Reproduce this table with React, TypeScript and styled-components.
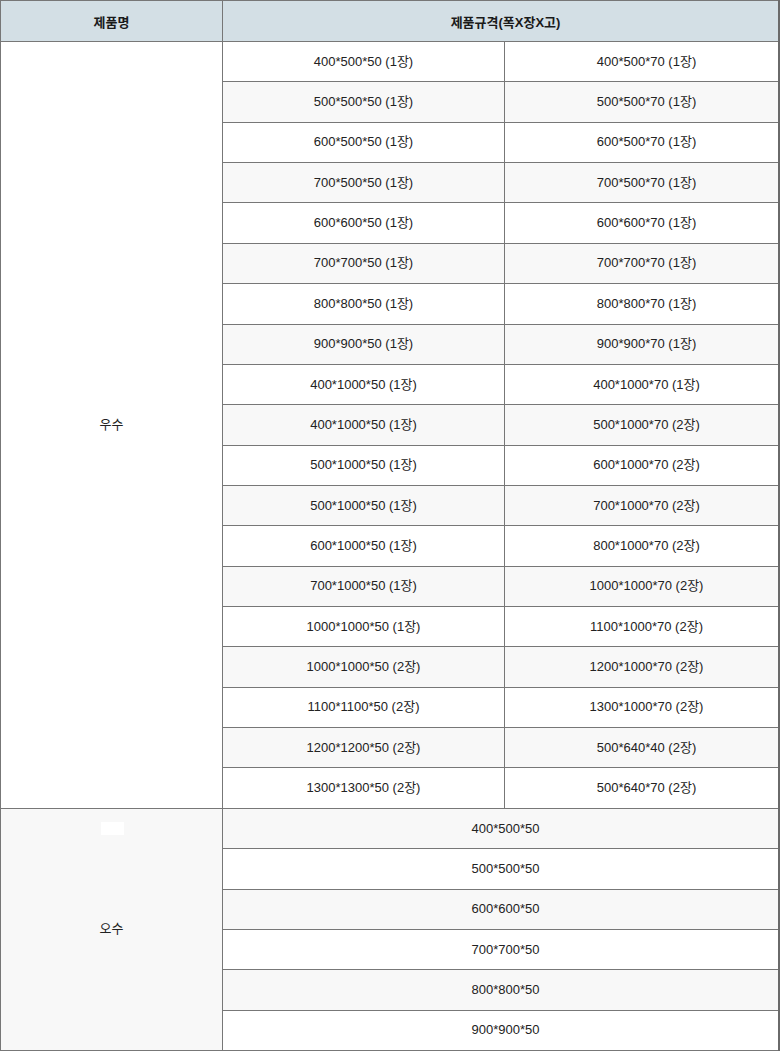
import React from 'react'
import styled, { createGlobalStyle } from 'styled-components'

const GlobalStyle = createGlobalStyle`
  html, body {
    margin: 0;
    padding: 0;
    background: #ffffff;
  }
  body {
    font-family: "Liberation Sans", "Noto Sans CJK KR", sans-serif;
    font-size: 13px;
    color: #222222;
  }
`

const Frame = styled.div`
  width: 780px;
  box-sizing: border-box;
  overflow: hidden;
  border-right: 2px solid #6a6a6a;
`

const Table = styled.table`
  width: 788px;
  border-collapse: collapse;
  table-layout: fixed;
  border: 1px solid #777777;
`

const HeadCell = styled.th`
  height: 40px;
  padding: 0;
  background: #d3dfe5;
  border: 1px solid #777777;
  font-weight: bold;
  font-size: 13px;
  text-align: center;
  vertical-align: middle;
  color: #1a1a1a;
`

const Row = styled.tr`
  height: 40.36px;
  &:nth-child(even) {
    background: #f8f8f8;
  }
`

const Cell = styled.td`
  padding: 0;
  border: 1px solid #777777;
  text-align: center;
  vertical-align: middle;
  font-size: 13px;
  line-height: 16px;
`

const GroupCell = styled(Cell)`
  position: relative;
`

const Blank = styled.span`
  position: absolute;
  left: 100px;
  top: 13px;
  width: 23px;
  height: 13px;
  background: #ffffff;
`

const wet: [string, string][] = [
  ['400*500*50 (1장)', '400*500*70 (1장)'],
  ['500*500*50 (1장)', '500*500*70 (1장)'],
  ['600*500*50 (1장)', '600*500*70 (1장)'],
  ['700*500*50 (1장)', '700*500*70 (1장)'],
  ['600*600*50 (1장)', '600*600*70 (1장)'],
  ['700*700*50 (1장)', '700*700*70 (1장)'],
  ['800*800*50 (1장)', '800*800*70 (1장)'],
  ['900*900*50 (1장)', '900*900*70 (1장)'],
  ['400*1000*50 (1장)', '400*1000*70 (1장)'],
  ['400*1000*50 (1장)', '500*1000*70 (2장)'],
  ['500*1000*50 (1장)', '600*1000*70 (2장)'],
  ['500*1000*50 (1장)', '700*1000*70 (2장)'],
  ['600*1000*50 (1장)', '800*1000*70 (2장)'],
  ['700*1000*50 (1장)', '1000*1000*70 (2장)'],
  ['1000*1000*50 (1장)', '1100*1000*70 (2장)'],
  ['1000*1000*50 (2장)', '1200*1000*70 (2장)'],
  ['1100*1100*50 (2장)', '1300*1000*70 (2장)'],
  ['1200*1200*50 (2장)', '500*640*40 (2장)'],
  ['1300*1300*50 (2장)', '500*640*70 (2장)'],
]

const sewage = ['400*500*50', '500*500*50', '600*600*50', '700*700*50', '800*800*50', '900*900*50']

export default function App() {
  return (
    <>
      <GlobalStyle />
      <Frame>
        <Table>
          <colgroup>
            <col style={{ width: 222 }} />
            <col style={{ width: 282 }} />
            <col style={{ width: 284 }} />
          </colgroup>
          <thead>
            <tr>
              <HeadCell>제품명</HeadCell>
              <HeadCell colSpan={2}>제품규격(폭X장X고)</HeadCell>
            </tr>
          </thead>
          <tbody>
            {wet.map(([a, b], i) => (
              <Row key={'w' + i}>
                {i === 0 && <GroupCell rowSpan={wet.length}>우수</GroupCell>}
                <Cell>{a}</Cell>
                <Cell>{b}</Cell>
              </Row>
            ))}
            {sewage.map((s, i) => (
              <Row key={'s' + i}>
                {i === 0 && (
                  <GroupCell rowSpan={sewage.length}>
                    <Blank />
                    오수
                  </GroupCell>
                )}
                <Cell colSpan={2}>{s}</Cell>
              </Row>
            ))}
          </tbody>
        </Table>
      </Frame>
    </>
  )
}
